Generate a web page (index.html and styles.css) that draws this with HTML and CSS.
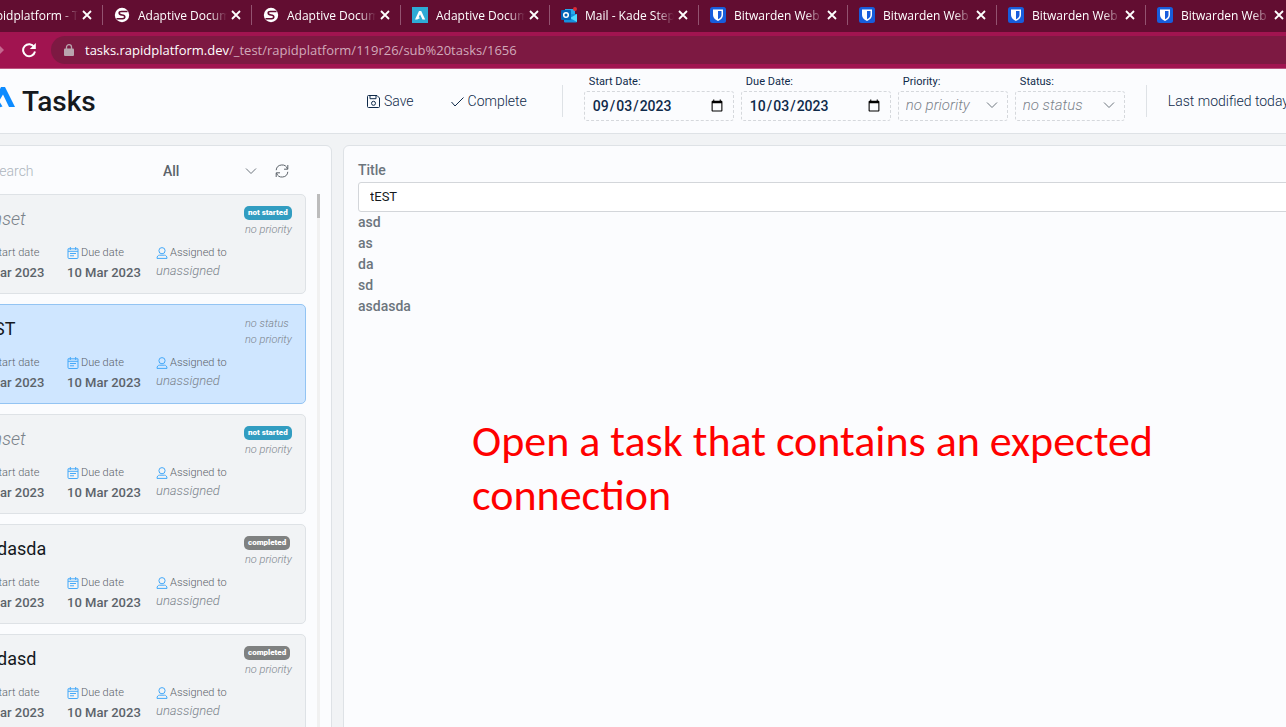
FILE: index.html
```html
<!DOCTYPE html>
<html lang="en">
<head>
<meta charset="utf-8">
<title>Tasks</title>
<link rel="stylesheet" href="styles.css">
</head>
<body>
<svg class="sprite" aria-hidden="true">
  <symbol id="close" viewBox="0 0 10 10"><path d="M1 1l8 8M9 1L1 9" fill="none" stroke="currentColor" stroke-width="1.8"/></symbol>
  <symbol id="globe" viewBox="0 0 16 16"><circle cx="8" cy="8" r="7.200" fill="#fff"/><path d="M13.500 4.500H7.500Q5 4.600 5.200 6.200T8 8t2.800 1.800T8.500 11.700H2.500" fill="none" stroke="#620d31" stroke-width="1.600"/></symbol>
  <symbol id="adaptive" viewBox="0 0 16 16"><rect width="16" height="16" fill="#2eaad6"/><path d="M3 12.500L7 4h2.200l4 8.500h-2.700L8 7.200l-1.300 3 1.500.8-3 1.500z" fill="#fff"/></symbol>
  <symbol id="mail" viewBox="0 0 16 16"><path d="M4 2h10v5H4z" fill="#28a8ea"/><path d="M3 7h13v7.500q0 1-1 1H4q-1 0-1-1z" fill="#1490df"/><path d="M9 11l7-4v8z" fill="#50d9ff"/><rect y="3" width="10" height="10" rx="1" fill="#0364b8"/><circle cx="5" cy="8" r="2.300" fill="none" stroke="#fff" stroke-width="1.500"/><circle cx="14" cy="2" r="2" fill="#d92c37"/></symbol>
  <symbol id="shield" viewBox="0 0 16 16"><rect width="16" height="16" rx="2.500" fill="#175ddc"/><path d="M3 2.500h10V8c0 3-2.500 4.800-5 6-2.500-1.200-5-3-5-6z" fill="#fff"/><path d="M8 4h3.500v4c0 2-1.500 3.200-3.500 4.300z" fill="#175ddc"/></symbol>
  <symbol id="chevron" viewBox="0 0 12 12"><path d="M1 3.500l5 5 5-5" fill="none" stroke="currentColor" stroke-width="1"/></symbol>
  <symbol id="calendar" viewBox="0 0 12 12"><path d="M1 1.800h10v8.700q0 1-1 1H2q-1 0-1-1zM1 4.300h10M3.300 0v3M8.700 0v3M3 6.500h6M3 8.800h4" fill="none" stroke="currentColor"/></symbol>
  <symbol id="person" viewBox="0 0 12 12"><path d="M6 .6a2.700 2.700 0 0 1 0 6.200 2.700 2.700 0 0 1 0-6.200zM1 11.400c0-2 1-3.200 2.500-3.200h5c1.500 0 2.500 1.200 2.500 3.200z" fill="none" stroke="currentColor"/></symbol>
</svg>

<nav class="tabs" aria-label="Browser tabs">
  <div class="tab"><span class="favicon"></span><span class="tab-title">apidplatform - T</span><button class="close" aria-label="Close tab"><svg><use href="#close"/></svg></button></div>
  <div class="tab"><svg class="favicon"><use href="#globe"/></svg><span class="tab-title">Adaptive Docum</span><button class="close" aria-label="Close tab"><svg><use href="#close"/></svg></button></div>
  <div class="tab"><svg class="favicon"><use href="#globe"/></svg><span class="tab-title">Adaptive Docum</span><button class="close" aria-label="Close tab"><svg><use href="#close"/></svg></button></div>
  <div class="tab"><svg class="favicon"><use href="#adaptive"/></svg><span class="tab-title">Adaptive Docum</span><button class="close" aria-label="Close tab"><svg><use href="#close"/></svg></button></div>
  <div class="tab"><svg class="favicon"><use href="#mail"/></svg><span class="tab-title">Mail - Kade Step</span><button class="close" aria-label="Close tab"><svg><use href="#close"/></svg></button></div>
  <div class="tab"><svg class="favicon"><use href="#shield"/></svg><span class="tab-title">Bitwarden Web V</span><button class="close" aria-label="Close tab"><svg><use href="#close"/></svg></button></div>
  <div class="tab"><svg class="favicon"><use href="#shield"/></svg><span class="tab-title">Bitwarden Web V</span><button class="close" aria-label="Close tab"><svg><use href="#close"/></svg></button></div>
  <div class="tab"><svg class="favicon"><use href="#shield"/></svg><span class="tab-title">Bitwarden Web V</span><button class="close" aria-label="Close tab"><svg><use href="#close"/></svg></button></div>
  <div class="tab"><svg class="favicon"><use href="#shield"/></svg><span class="tab-title">Bitwarden Web V</span><button class="close" aria-label="Close tab"><svg><use href="#close"/></svg></button></div>
</nav>

<div class="toolbar">
  <svg class="forward" viewBox="0 0 4 8"><path d="M0 0l4 4-4 4z" fill="#c4688f"/></svg>
  <button class="reload" aria-label="Reload"><svg viewBox="0 0 16 16"><path d="M13.200 5A6 6 0 1 0 14 9.500" fill="none" stroke="#fff" stroke-width="2"/><path d="M14.800 1v6H8.800z" fill="#fff"/></svg></button>
  <div class="address">
    <svg class="lock" viewBox="0 0 10 12"><path d="M1 4.500h8q1 0 1 1V11q0 1-1 1H1q-1 0-1-1V5.500q0-1 1-1z" fill="#b9a5ae"/><path d="M2.500 5V3a2.500 2.300 0 0 1 5 0v2" fill="none" stroke="#b9a5ae" stroke-width="1.300"/></svg>
    <span class="url"><span class="host">tasks.rapidplatform.dev</span>/_test/rapidplatform/119r26/sub%20tasks/1656</span>
  </div>
</div>

<div class="app">
  <header class="header">
    <div class="brand">
      <svg class="logo" viewBox="0 0 26 22"><path d="M1 21L12 0h4l10 20h-6L14 7.500 10 14l3.500 5.500L9 21z" fill="#0d8bff"/></svg>
      <h1>Tasks</h1>
    </div>
    <div class="actions">
      <button class="action"><svg viewBox="0 0 13 13"><path d="M.5 1.500q0-1 1-1h8.500l2.500 2.500v8.500q0 1-1 1h-10q-1 0-1-1zM3 .5v3.200h6V.5" fill="none" stroke="currentColor"/><circle cx="6.500" cy="8.300" r="2" fill="none" stroke="currentColor"/></svg>Save</button>
      <button class="action"><svg viewBox="0 0 13 13"><path d="M.5 7l3.500 4L12.500 2.500" fill="none" stroke="currentColor"/></svg>Complete</button>
    </div>
    <div class="fields">
      <div class="field"><label for="start">Start Date:</label><input class="box date" id="start" type="date" value="2023-09-03"></div>
      <div class="field"><label for="due">Due Date:</label><input class="box date" id="due" type="date" value="2023-10-03"></div>
      <div class="field"><label for="priority">Priority:</label><div class="pick"><select class="box choice" id="priority"><option>no priority</option></select><svg class="chevron"><use href="#chevron"/></svg></div></div>
      <div class="field"><label for="status">Status:</label><div class="pick"><select class="box choice" id="status"><option>no status</option></select><svg class="chevron"><use href="#chevron"/></svg></div></div>
    </div>
    <p class="modified">Last modified today</p>
  </header>

  <div class="columns">
    <aside class="panel sidebar">
      <div class="filters">
        <input class="search" type="search" placeholder="Search" aria-label="Search">
        <div class="pick scope"><select aria-label="Filter"><option>All</option></select><svg class="chevron"><use href="#chevron"/></svg></div>
        <button class="refresh" aria-label="Refresh"><svg viewBox="0 0 14 14"><path d="M1.200 6.200A5.800 5.800 0 0 1 12.500 5M12.800 7.800A5.800 5.800 0 0 1 1.500 9M12.800 1v4.200H9M1.200 13V8.800H5" fill="none" stroke="currentColor"/></svg></button>
      </div>
      <div class="list-area">
        <div class="list">
          <article class="card">
            <div class="card-top"><h2 class="unset">unset</h2><div class="state"><span class="badge">not started</span><em>no priority</em></div></div>
            <dl class="meta">
              <div><dt><svg><use href="#calendar"/></svg>Start date</dt><dd>9 Mar 2023</dd></div>
              <div><dt><svg><use href="#calendar"/></svg>Due date</dt><dd>10 Mar 2023</dd></div>
              <div><dt><svg><use href="#person"/></svg>Assigned to</dt><dd class="nobody">unassigned</dd></div>
            </dl>
          </article>
          <article class="card selected">
            <div class="card-top"><h2>tEST</h2><div class="state"><em>no status</em><em>no priority</em></div></div>
            <dl class="meta">
              <div><dt><svg><use href="#calendar"/></svg>Start date</dt><dd>9 Mar 2023</dd></div>
              <div><dt><svg><use href="#calendar"/></svg>Due date</dt><dd>10 Mar 2023</dd></div>
              <div><dt><svg><use href="#person"/></svg>Assigned to</dt><dd class="nobody">unassigned</dd></div>
            </dl>
          </article>
          <article class="card">
            <div class="card-top"><h2 class="unset">unset</h2><div class="state"><span class="badge">not started</span><em>no priority</em></div></div>
            <dl class="meta">
              <div><dt><svg><use href="#calendar"/></svg>Start date</dt><dd>9 Mar 2023</dd></div>
              <div><dt><svg><use href="#calendar"/></svg>Due date</dt><dd>10 Mar 2023</dd></div>
              <div><dt><svg><use href="#person"/></svg>Assigned to</dt><dd class="nobody">unassigned</dd></div>
            </dl>
          </article>
          <article class="card">
            <div class="card-top"><h2>asdasda</h2><div class="state"><span class="badge done">completed</span><em>no priority</em></div></div>
            <dl class="meta">
              <div><dt><svg><use href="#calendar"/></svg>Start date</dt><dd>9 Mar 2023</dd></div>
              <div><dt><svg><use href="#calendar"/></svg>Due date</dt><dd>10 Mar 2023</dd></div>
              <div><dt><svg><use href="#person"/></svg>Assigned to</dt><dd class="nobody">unassigned</dd></div>
            </dl>
          </article>
          <article class="card">
            <div class="card-top"><h2>asdasd</h2><div class="state"><span class="badge done">completed</span><em>no priority</em></div></div>
            <dl class="meta">
              <div><dt><svg><use href="#calendar"/></svg>Start date</dt><dd>9 Mar 2023</dd></div>
              <div><dt><svg><use href="#calendar"/></svg>Due date</dt><dd>10 Mar 2023</dd></div>
              <div><dt><svg><use href="#person"/></svg>Assigned to</dt><dd class="nobody">unassigned</dd></div>
            </dl>
          </article>
        </div>
        <div class="track"><div class="thumb"></div></div>
      </div>
    </aside>

    <main class="panel detail">
      <label for="title">Title</label>
      <input class="title-input" id="title" type="text" value="tEST">
      <p>asd</p>
      <p>as</p>
      <p>da</p>
      <p>sd</p>
      <p>asdasda</p>
      <p class="note">Open a task that contains an expected connection</p>
    </main>
  </div>
</div>
</body>
</html>
```

FILE: styles.css
```css
* {
  box-sizing: border-box;
}

body {
  margin: 0;
  height: 100vh;
  overflow: hidden;
  display: flex;
  flex-direction: column;
  background: #f1f3f5;
  color: #0f2a4a;
  font-family: Roboto, "Liberation Sans", sans-serif;
  font-size: 14px;
}

h1, h2, p, dl, dd {
  margin: 0;
}

button, input, select {
  margin: 0;
  padding: 0;
  border: 0;
  background: none;
  color: inherit;
  font: inherit;
}

svg {
  display: block;
  flex: none;
}

.sprite {
  position: absolute;
  width: 0;
  height: 0;
}

/* Browser chrome */
.tabs {
  flex: none;
  display: flex;
  height: 32px;
  margin-left: -46px;
  background: #620d31;
  color: #fff;
  font-family: "Open Sans", "Noto Sans", sans-serif;
  font-size: 12px;
}

.tab {
  flex: none;
  display: flex;
  align-items: center;
  width: 149px;
  height: 30px;
  padding: 0 9px 0 11px;
  background: linear-gradient(#935370, #935370) right 5px / 1px 20px no-repeat;
}

.favicon {
  flex: none;
  width: 16px;
  height: 16px;
  margin-right: 8px;
}

.tab-title {
  flex: 1;
  overflow: hidden;
  white-space: nowrap;
  -webkit-mask-image: linear-gradient(to right, #000 80%, transparent);
  mask-image: linear-gradient(to right, #000 80%, transparent);
}

.close {
  display: grid;
  place-items: center;
  width: 14px;
  height: 14px;
  margin-left: 2px;
}

.close svg {
  width: 10px;
  height: 10px;
}

.toolbar {
  flex: none;
  display: flex;
  align-items: center;
  height: 37px;
  background: #a11450;
  border-bottom: 1px solid #bd5581;
}

.forward {
  width: 4px;
  height: 8px;
}

.reload {
  margin: 0 14px 0 17px;
}

.reload svg {
  width: 16px;
  height: 16px;
}

.address {
  flex: 1;
  display: flex;
  align-items: center;
  gap: 11px;
  height: 28px;
  padding-left: 13px;
  border-radius: 14px 0 0 14px;
  background: #7d1942;
  color: #d1a9ba;
  font-family: "Open Sans", "Noto Sans", sans-serif;
  font-size: 13px;
}

.lock {
  width: 10px;
  height: 12px;
}

.host {
  color: #fff;
}

/* Application */
.app {
  flex: 1;
  min-height: 0;
  margin: 0 -32px 0 -59px;
}

.header {
  display: flex;
  align-items: center;
  height: 65px;
  padding-left: 48px;
  background: #fbfcfe;
  border-bottom: 1px solid #dee2e6;
  white-space: nowrap;
}

.brand {
  flex: none;
  display: flex;
  align-items: center;
  gap: 7px;
  width: 378px;
}

.logo {
  width: 26px;
  height: 22px;
  margin-bottom: 6px;
}

h1 {
  color: #15191d;
  font-size: 28px;
  font-weight: 500;
}

.actions {
  flex: none;
  display: flex;
  gap: 37px;
}

.action {
  display: flex;
  align-items: center;
  gap: 4px;
  font-weight: 300;
}

.action svg {
  width: 13px;
  height: 13px;
}

.fields {
  flex: none;
  display: flex;
  gap: 7px;
  height: 64px;
  margin-left: 35px;
  padding: 6px 22px 0;
  background:
    linear-gradient(#dee2e6, #dee2e6) left 16px / 1px 32px no-repeat,
    linear-gradient(#dee2e6, #dee2e6) right 16px / 1px 32px no-repeat;
}

.field label {
  display: block;
  padding-left: 5px;
  font-size: 11px;
  line-height: 14px;
}

.box {
  width: 110px;
  height: 30px;
  margin-top: 2px;
  padding: 0 7px;
  border: 1px dashed #d5d8dc;
  border-radius: 3px;
}

.date {
  width: 150px;
  font-weight: 500;
}

.pick {
  display: grid;
  align-items: center;
}

.pick > * {
  grid-area: 1 / 1;
}

.pick select {
  appearance: none;
  outline: none;
}

.choice {
  padding-bottom: 2px;
  color: #7b838b;
  font-size: 15px;
  font-style: italic;
  font-weight: 300;
}

.chevron {
  justify-self: end;
  width: 12px;
  height: 12px;
  margin-right: 10px;
  color: #6c757d;
  pointer-events: none;
}

.modified {
  margin-left: 21px;
  font-weight: 300;
}

.columns {
  display: grid;
  grid-template-columns: 379px 1fr;
  gap: 11px;
  padding: 11px 0 0 12px;
}

.panel {
  background: #fbfcfe;
  border: 1px solid #dee2e6;
  border-radius: 6px;
}

.sidebar {
  padding: 0 11px 11px;
}

.filters {
  display: grid;
  grid-template-columns: 1fr 104px 14px;
  column-gap: 8px;
  align-items: center;
  height: 48px;
  padding: 2px 31px 0 26px;
  color: #5c636a;
}

.search {
  min-width: 0;
  font-weight: 300;
}

.search::placeholder {
  color: #adb5bd;
}

.scope select {
  font-weight: 500;
}

.refresh svg {
  width: 14px;
  height: 14px;
}

.list-area {
  display: flex;
  gap: 11px;
}

.list {
  flex: 1;
  display: grid;
  gap: 10px;
}

.track {
  width: 3px;
  background: #f1f1f1;
}

.thumb {
  height: 24px;
  background: #bcbcbc;
}

.card {
  height: 100px;
  padding: 10px 12px;
  background: #f1f3f5;
  border: 1px solid #dee2e6;
  border-radius: 5px;
  color: #5c636a;
}

.selected {
  background: #cfe6ff;
  border-color: #93c4f3;
}

.card-top {
  display: flex;
  justify-content: space-between;
  height: 41px;
}

h2 {
  color: #15191d;
  font-size: 18px;
  font-weight: 400;
  line-height: 28px;
}

h2.unset {
  padding-left: 5px;
  color: #7b838b;
  font-style: italic;
  font-weight: 300;
}

.state {
  display: flex;
  flex-direction: column;
  align-items: flex-start;
  width: 49px;
  padding-top: 1px;
  font-size: 11px;
  line-height: 16px;
  white-space: nowrap;
  color: #7b838b;
}

.state em {
  padding-left: 1px;
  font-weight: 300;
}

.badge {
  height: 14px;
  margin-bottom: 2px;
  padding: 0 4px;
  border-radius: 5px;
  background: #329dc1;
  color: #fff;
  font-size: 8px;
  font-weight: 900;
  line-height: 14px;
}

.done {
  background: #7f8181;
}

.meta {
  display: grid;
  grid-template-columns: 89px 89px 1fr;
}

dt {
  display: flex;
  align-items: center;
  gap: 2px;
  font-size: 11px;
  font-weight: 300;
  line-height: 14px;
}

dt svg {
  width: 12px;
  height: 12px;
  color: #45a9f9;
}

dd {
  margin-top: 4px;
  font-size: 13px;
  font-weight: 500;
  line-height: 18px;
}

dd.nobody {
  margin-top: 2px;
  color: #7b838b;
  font-style: italic;
  font-weight: 300;
}

.detail {
  position: relative;
  padding: 14px;
  color: #6c757d;
  font-weight: 500;
  line-height: 21px;
}

.detail label {
  display: block;
}

.title-input {
  width: 100%;
  height: 30px;
  padding: 0 11px 2px;
  display: block;
  margin-top: 1px;
  border: 1px solid #d3d6da;
  border-radius: 3px;
  background: #fff;
  color: #15191d;
  font-size: 13px;
  font-weight: 400;
}

.note {
  position: absolute;
  top: 268px;
  left: 128px;
  width: 720px;
  color: #f00;
  font-family: Carlito, Lato, sans-serif;
  font-size: 44px;
  font-weight: 400;
  line-height: 54px;
}
```
